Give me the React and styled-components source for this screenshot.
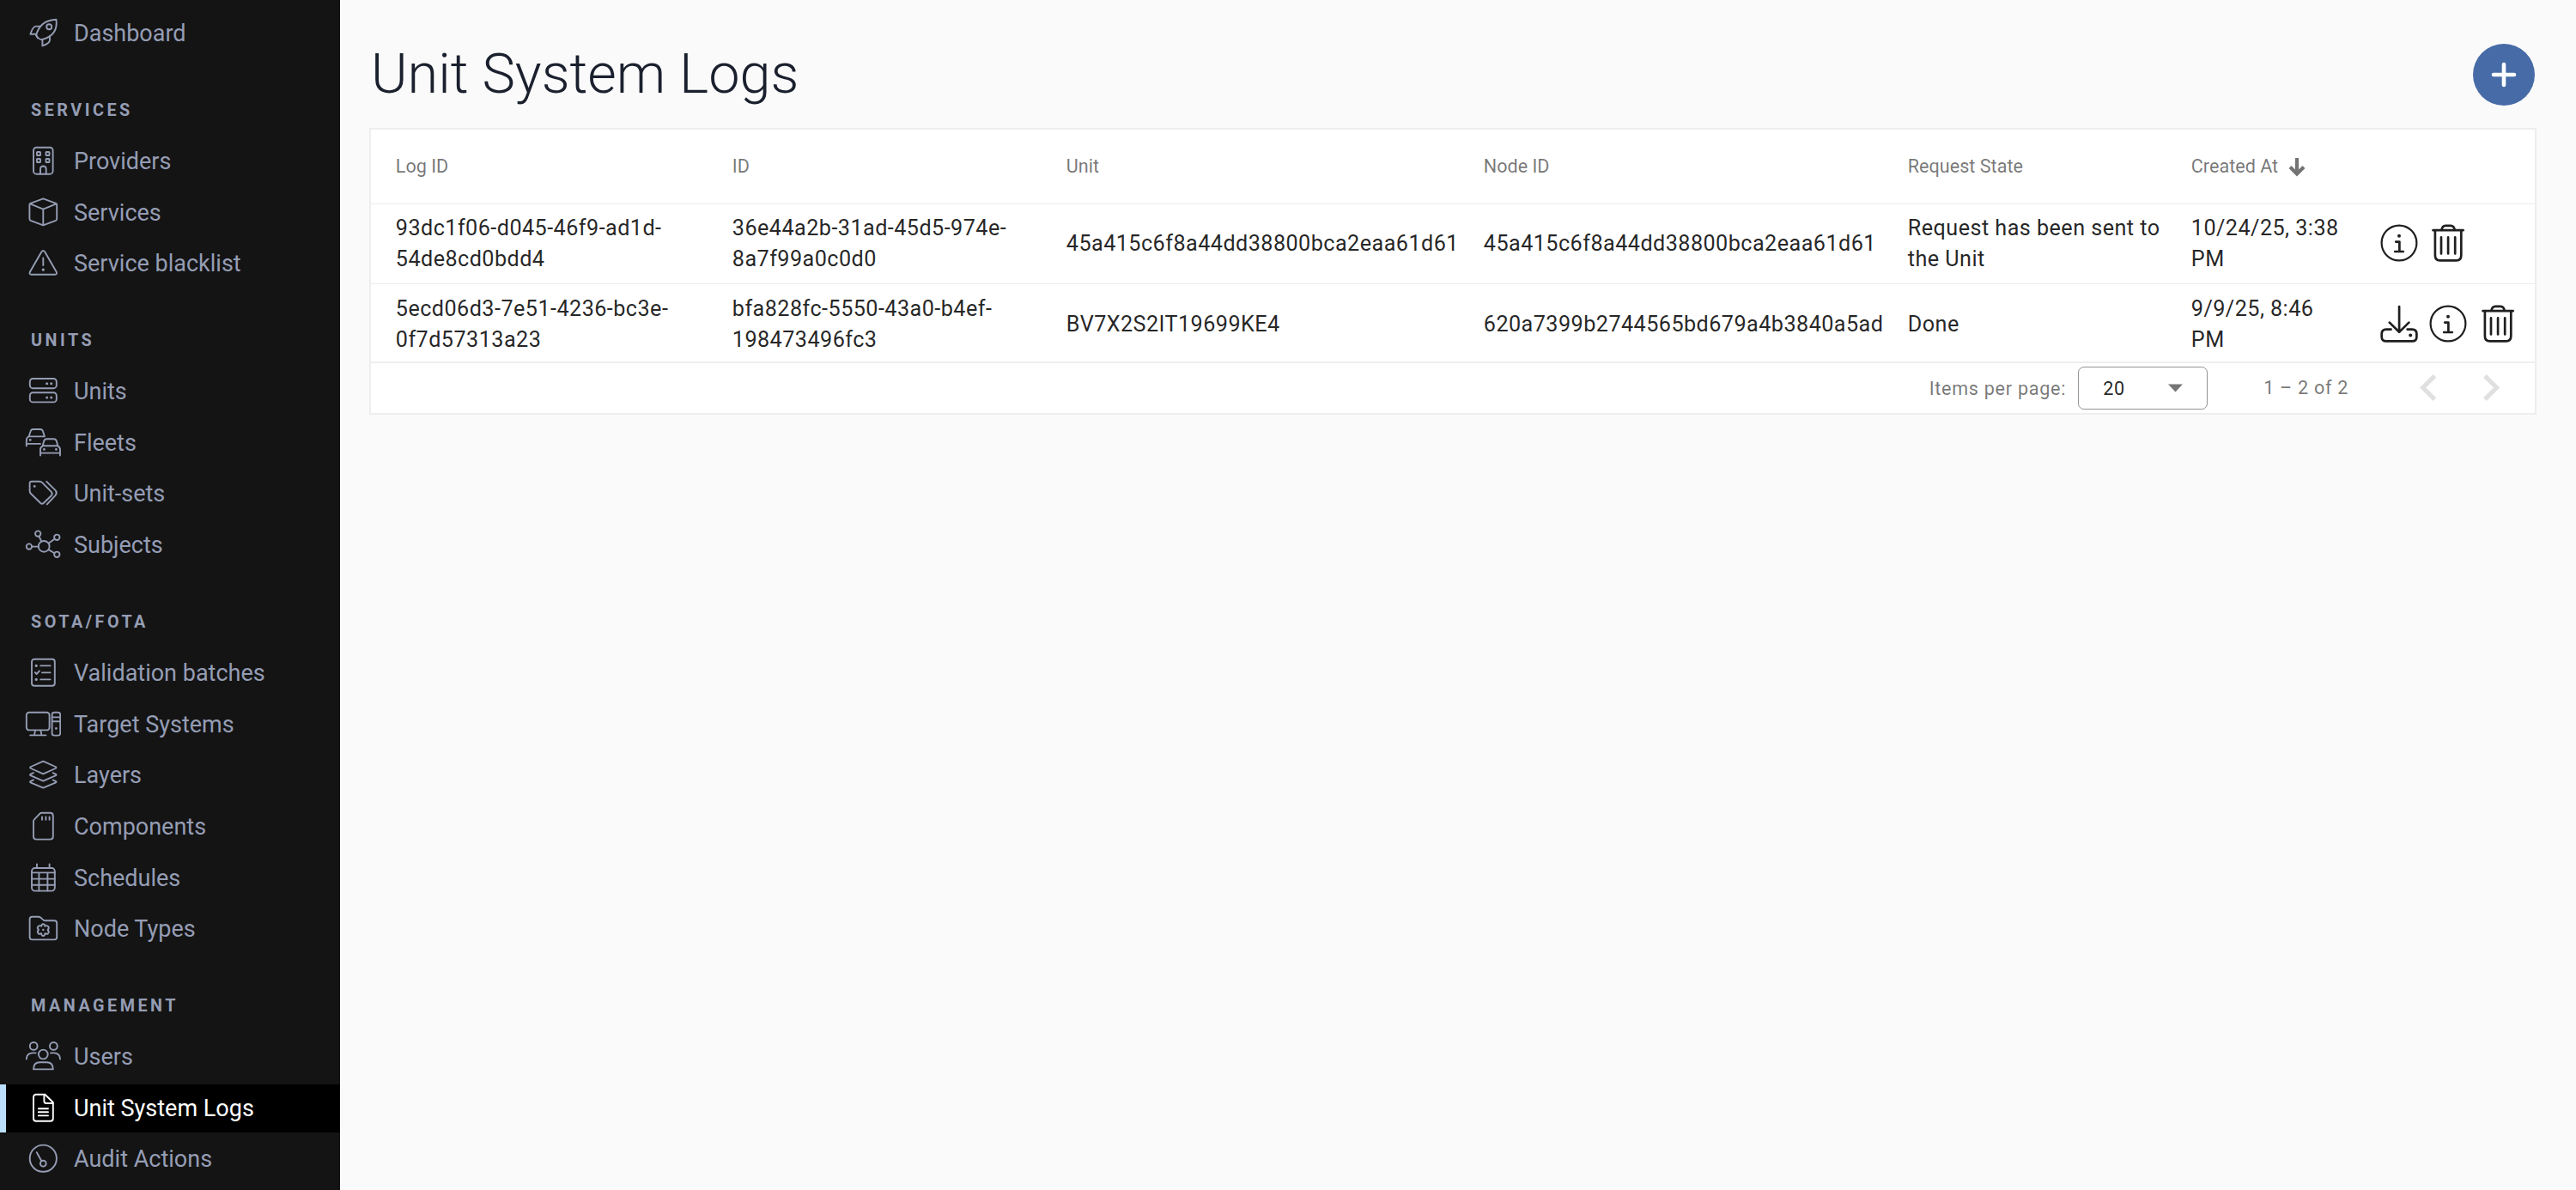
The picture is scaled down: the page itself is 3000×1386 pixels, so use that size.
import React from 'react';
import styled, { createGlobalStyle, css } from 'styled-components';

const GlobalStyle = createGlobalStyle`
  *, *::before, *::after { box-sizing: border-box; }
  html, body, #root { height: 100%; margin: 0; }
  body {
    background: #fafafa;
    font-family: Roboto, "Liberation Sans", sans-serif;
    color: #212121;
    overflow: hidden;
  }
`;

const Shell = styled.div`
  display: flex;
  height: 100vh;
`;

/* ---------- sidebar ---------- */

const Sidebar = styled.nav`
  flex: 0 0 396px;
  padding-top: 11px;
  background: #141414;
  color: #959db4;
  overflow: hidden;
`;

const SectionTitle = styled.h2`
  height: 89.3px;
  margin: 0;
  padding: 45px 0 0 36px;
  font-size: 19.8px;
  line-height: 26px;
  font-weight: 700;
  letter-spacing: 3.5px;
  text-transform: uppercase;
`;

const NavItem = styled.a`
  display: flex;
  align-items: center;
  height: 56px;
  margin-bottom: 3.65px;
  padding-left: 22px;
  border-left: 7px solid transparent;
  font-size: 27px;
  line-height: 32px;
  ${(p) => p.$active && css`
    background: #000;
    border-left-color: #bbdefb;
    color: #fff;
  `}
`;

const NavIcon = styled.svg`
  flex: none;
  width: 42px;
  height: 34px;
  margin: 0 15px 2px 0;
  fill: none;
  stroke: currentColor;
  stroke-width: 1.9;
  stroke-linecap: round;
  stroke-linejoin: round;
`;

/* ---------- content ---------- */

const Content = styled.main`
  flex: 1;
  display: flex;
  flex-direction: column;
  padding: 51px 46px 0 34px;
`;

const TitleBar = styled.header`
  display: flex;
  justify-content: space-between;
  align-items: center;
  height: 72px;
  padding-right: 2px;
`;

const Title = styled.h1`
  margin: 0 0 2px 2px;
  font-size: 64.8px;
  line-height: 72px;
  font-weight: 300;
  color: #1a202e;
`;

const AddButton = styled.button`
  display: grid;
  place-items: center;
  width: 72px;
  height: 72px;
  padding: 0;
  border: 0;
  border-radius: 50%;
  background: #466ba6;
`;

const Card = styled.section`
  margin-top: 26px;
  border: 2px solid #eeeeee;
  background: #fff;
`;

const columns = '392px 389px 486px 494px 330px 220px 1fr';

const HeadRow = styled.div`
  display: grid;
  grid-template-columns: ${columns};
  align-items: center;
  height: 87px;
  padding: 0 0 2px 28.8px;
  border-bottom: 1px solid #ebebeb;
  font-size: 21.6px;
  color: rgba(0, 0, 0, 0.54);
`;

const HeadCell = styled.div`
  display: flex;
  align-items: center;
  gap: 12px;
`;

const SortArrow = styled.svg`
  width: 20px;
  height: 22px;
  margin-top: 3px;
  fill: none;
  stroke: #737373;
  stroke-width: 4.2;
`;

const BodyRow = styled.div`
  display: grid;
  grid-template-columns: ${columns};
  align-items: center;
  height: 93px;
  padding-left: 28.8px;
  border-bottom: 1px solid #ebebeb;
  font-size: 25.2px;
  line-height: 36px;
  letter-spacing: 0.45px;
  color: rgba(0, 0, 0, 0.87);

  &:nth-child(3) {
    height: 92px;
    padding-top: 3px;
    border-bottom: 2px solid #eeeeee;
  }
`;

const Cell = styled.div`
  padding-right: 28px;
`;

const DateCell = styled(Cell)`
  padding-right: 36px;
`;

const Actions = styled.div`
  display: flex;
  gap: 13.6px;
  padding-bottom: 2px;
`;

const ActionIcon = styled.svg`
  flex: none;
  width: 44px;
  height: 44px;
  fill: none;
  stroke: #1f1f1f;
  stroke-width: 2.7;
  stroke-linecap: round;
  stroke-linejoin: round;
`;

const Paginator = styled.footer`
  display: flex;
  justify-content: flex-end;
  align-items: center;
  height: 58px;
  padding-right: 14px;
  font-size: 21.6px;
  letter-spacing: 0.72px;
  color: rgba(0, 0, 0, 0.54);
`;

const PageSize = styled.div`
  display: flex;
  align-items: center;
  justify-content: space-between;
  width: 151px;
  height: 50px;
  margin: 0 65px 0 14px;
  padding: 0 28px;
  border: 1px solid rgba(0, 0, 0, 0.42);
  border-radius: 7px;
  color: rgba(0, 0, 0, 0.87);
`;

const RangeLabel = styled.span`
  padding-bottom: 1px;
`;

const PagerGroup = styled.div`
  display: flex;
  margin-left: 56px;
`;

const PagerButton = styled.button`
  display: grid;
  place-items: center;
  width: 73.4px;
  height: 56px;
  padding: 0 0 1px;
  border: 0;
  background: none;
  color: #e0e0e0;
`;

const Chevron = styled.svg`
  width: 19.3px;
  height: 31px;
  fill: currentColor;
`;

/* ---------- icon drawings, sidebar icons on a 42x34 grid ---------- */

const icons = {
  rocket: (
    <>
      <path d="M13 20.5 Q17.5 2.5 36.5 1.8 Q39 20 20 25 Q17 25.5 13 20.5Z" />
      <circle cx="28.2" cy="10.2" r="3" />
      <path d="M17.8 9.6 H12.8 Q9 9.9 6.4 18.8 L13 18.8" />
      <path d="M20.4 25 V32.4 Q29 29.5 29 25.5 V20.6" />
      <path d="M14.8 23.2 L13.4 20" />
    </>
  ),
  building: (
    <>
      <rect x="10" y="1.7" width="22.6" height="31" rx="3.5" />
      <rect x="14" y="7" width="4" height="4" rx=".6" />
      <rect x="24.5" y="7" width="4" height="4" rx=".6" />
      <rect x="14" y="15" width="4" height="4" rx=".6" />
      <rect x="24.5" y="15" width="4" height="4" rx=".6" />
      <path d="M18 32.4 V26.5 Q18.2 23.6 21.3 23.5 Q24.5 23.6 24.7 26.5 V32.4" />
    </>
  ),
  box: (
    <>
      <path d="M21.3 1.4 L36.2 6.8 Q37.2 7.2 37.2 8.4 V24.5 Q37.2 26.2 36 26.8 L21.3 32.4 L6.6 26.8 Q5.4 26.2 5.4 24.5 V8.4 Q5.4 7.2 6.4 6.8Z" />
      <path d="M6 7.4 L21.3 13.6 L36.6 7.4 M21.3 13.6 V32" />
    </>
  ),
  warning: (
    <>
      <path d="M19.4 4.3 Q21.3 1.8 23.2 4.3 L36.6 27.4 Q38 30.6 35 30.7 H7.6 Q4.6 30.6 6 27.4Z" />
      <path d="M21.3 11.5 V20" />
      <circle cx="21.3" cy="25.2" r=".7" fill="currentColor" />
    </>
  ),
  server: (
    <>
      <rect x="5.8" y="3" width="31" height="11.2" rx="3.5" />
      <rect x="5.8" y="19.2" width="31" height="11.2" rx="3.5" />
      <g fill="currentColor" stroke="none">
        <circle cx="25.6" cy="8.8" r="1.5" />
        <circle cx="30.7" cy="8.8" r="1.5" />
        <circle cx="25.6" cy="24.9" r="1.5" />
        <circle cx="30.7" cy="24.9" r="1.5" />
      </g>
    </>
  ),
  cars: (
    <>
      <path d="M1.8 21.4 V14.6 Q1.8 11.8 4.6 10.2 L6.6 4.2 Q7.2 2 9.6 2 H18 Q20.4 2 21 4.2 L22.9 10.4 H4.4 M2 18.9 H18" />
      <path d="M18 32.6 V25.6 Q18 22.8 20.6 21.6 L22.2 15.6 Q23 13.2 25.4 13.2 H33.6 Q36 13.2 36.8 15.6 L38.4 21.6 Q41 22.8 41 25.6 V32.6 M18 29.6 H41 M20.8 21.2 H38.2" />
      <g fill="currentColor" stroke="none">
        <circle cx="6.2" cy="14.4" r="1.4" />
        <circle cx="22.4" cy="25.4" r="1.4" />
        <circle cx="36.4" cy="25.4" r="1.4" />
      </g>
    </>
  ),
  tags: (
    <>
      <path d="M8 3.8 H17 Q18.8 3.8 20.2 5.2 L30.8 15.8 Q32.8 18 30.8 20.2 L22 28.8 Q20 30.6 18 28.8 L7 18 Q5.6 16.6 5.6 14.8 V6.2 Q5.6 3.8 8 3.8Z" />
      <path d="M25.2 3.8 L35.6 14.2 Q38 17 35.6 19.8 L25.8 30.4" />
      <circle cx="11.2" cy="9.4" r="1.4" fill="currentColor" stroke="none" />
    </>
  ),
  nodes: (
    <>
      <circle cx="22.2" cy="19.4" r="6.4" />
      <circle cx="15.2" cy="4.6" r="3.2" />
      <circle cx="37.3" cy="8.8" r="3.2" />
      <circle cx="4.9" cy="19.6" r="3.2" />
      <circle cx="37.3" cy="28.8" r="3.2" />
      <path d="M16.6 7.8 L19.2 13.4 M34.6 10.8 L27.6 15.8 M8.4 19.6 H15.6 M34.4 27.2 L27.8 23.4" />
    </>
  ),
  checklist: (
    <>
      <rect x="8" y="1.8" width="26.8" height="31" rx="3" />
      <path d="M18.2 9.4 H29.6 M20 17.4 H29.6 M18.2 25.4 H29.6 M11.8 17.2 L13.6 19 L17 15.4" />
      <g fill="currentColor" stroke="none">
        <circle cx="13.2" cy="9.4" r="1.6" />
        <circle cx="13.2" cy="25.4" r="1.6" />
      </g>
    </>
  ),
  computer: (
    <>
      <rect x="1.8" y="3.8" width="26.8" height="20.6" rx="3.2" />
      <path d="M12 24.6 L11 30.2 M18.4 24.6 L19.4 30.2 M6.2 30.4 H24.4" />
      <rect x="31.6" y="3.8" width="9.6" height="26.8" rx="2.6" />
      <path d="M31.8 9.4 H41 M31.8 14.2 H41" />
      <circle cx="36.4" cy="22.4" r="1.4" fill="currentColor" stroke="none" />
    </>
  ),
  layers: (
    <>
      <path d="M21.3 1.6 L35.6 8 Q37.4 9 35.6 10 L21.3 16.4 L7 10 Q5.2 9 7 8Z" />
      <path d="M10 15.2 L6.8 16.6 Q5.2 17.6 7 18.4 L21.3 24.6 L35.6 18.4 Q37.4 17.6 35.8 16.6 L32.6 15.2" />
      <path d="M10 23.4 L6.8 24.8 Q5.2 25.8 7 26.6 L21.3 32.6 L35.6 26.6 Q37.4 25.8 35.8 24.8 L32.6 23.4" />
    </>
  ),
  sdcard: (
    <>
      <path d="M19.4 1.8 H29.4 Q32.8 1.8 32.8 5.2 V29.2 Q32.8 32.6 29.4 32.6 H13.6 Q10 32.6 10 29.2 V11.6 Q10 10.4 10.8 9.6 L17.4 2.6 Q18.2 1.8 19.4 1.8Z" />
      <path d="M20 6.4 V9.8 M24.4 6.4 V9.8 M28.6 6.4 V9.8" />
    </>
  ),
  calendar: (
    <>
      <rect x="8" y="6" width="26.8" height="26.6" rx="3.6" />
      <path d="M14 1.4 V6 M28.6 1.4 V6 M8 11.4 H34.8 M8 18.6 H34.8 M8 25.8 H34.8 M16.4 11.4 V32.4 M26.4 11.4 V32.4" />
    </>
  ),
  folder: (
    <>
      <path d="M8.4 3.8 H15.6 Q17.2 3.8 18.4 4.8 L21.4 7.4 Q22.4 8.2 23.8 8.2 H34.2 Q37.2 8.2 37.2 11 V27.6 Q37.2 30.4 34.4 30.4 H8.4 Q5.6 30.4 5.6 27.6 V6.6 Q5.6 3.8 8.4 3.8Z" />
      <path d="M19.2 14.8 Q19.4 12.2 21.3 12.2 Q23.2 12.2 23.4 14.8 Q25.6 13.4 27 14.8 Q28.8 16.6 26.6 19 Q28.8 21.4 27 23.2 Q25.6 24.4 23.4 23.2 Q23.2 26 21.3 26 Q19.4 26 19.2 23.2 Q17 24.4 15.6 23.2 Q13.8 21.4 16 19 Q13.8 16.6 15.6 14.8 Q17 13.4 19.2 14.8Z" />
      <circle cx="21.3" cy="19" r="1.2" fill="currentColor" stroke="none" />
    </>
  ),
  users: (
    <>
      <circle cx="10.2" cy="5.4" r="4.4" />
      <circle cx="33.4" cy="5.4" r="4.4" />
      <circle cx="21.3" cy="15" r="5.4" />
      <path d="M1.8 20.6 Q1.8 14.2 8.4 13.4 H12.6 M41 20.6 Q41 14.2 34.4 13.4 H30" />
      <path d="M10 32.4 Q10 24.2 17.4 24.2 H25.4 Q32.8 24.2 32.8 32.4Z" />
    </>
  ),
  document: (
    <>
      <path d="M13 1.8 H23.4 L32.8 11 V29.8 Q32.8 32.8 29.8 32.8 H13 Q10 32.8 10 29.8 V4.8 Q10 1.8 13 1.8Z" />
      <path d="M22.4 2 V9.6 Q22.4 12 24.8 12 H32.6 M15.8 18.2 H27 M15.8 22.2 H27 M15.8 26.4 H27" />
    </>
  ),
  gauge: (
    <>
      <circle cx="21.3" cy="17.2" r="15.6" />
      <circle cx="21.3" cy="23.2" r="3.4" />
      <path d="M19.4 20.2 L13.8 10.2" />
    </>
  ),
};

const navigation = [
  { items: [['Dashboard', 'rocket']] },
  {
    title: 'Services',
    items: [['Providers', 'building'], ['Services', 'box'], ['Service blacklist', 'warning']],
  },
  {
    title: 'Units',
    items: [['Units', 'server'], ['Fleets', 'cars'], ['Unit-sets', 'tags'], ['Subjects', 'nodes']],
  },
  {
    title: 'SOTA/FOTA',
    items: [
      ['Validation batches', 'checklist'],
      ['Target Systems', 'computer'],
      ['Layers', 'layers'],
      ['Components', 'sdcard'],
      ['Schedules', 'calendar'],
      ['Node Types', 'folder'],
    ],
  },
  {
    title: 'Management',
    items: [['Users', 'users'], ['Unit System Logs', 'document'], ['Audit Actions', 'gauge']],
  },
];

const InfoIcon = () => (
  <ActionIcon viewBox="0 0 44 44">
    <circle cx="22" cy="22" r="20.4" strokeWidth="2.2" />
    <circle cx="22" cy="13.8" r="2" fill="#1f1f1f" stroke="none" />
    <path d="M18.2 20.6 H22.4 V32 M17.2 32 H26.8" />
  </ActionIcon>
);

const TrashIcon = () => (
  <ActionIcon viewBox="0 0 44 44">
    <path d="M4.6 7.2 H39.6" />
    <path d="M14.4 6.8 Q15.4 1.8 19 1.8 H25.2 Q28.8 1.8 29.8 6.8" />
    <path d="M6.9 7.6 V36.6 Q6.9 42.4 12.6 42.4 H31.6 Q37.3 42.4 37.3 36.6 V7.6" />
    <path d="M14 15.4 V34.4 M22.1 15.4 V34.4 M30.2 15.4 V34.4" />
  </ActionIcon>
);

const DownloadIcon = () => (
  <ActionIcon viewBox="0 0 44 44">
    <path d="M22.1 2 V31.4 M10.8 20.6 L22.1 31.8 L33.4 20.6" />
    <path d="M12.6 28.6 H7 Q1.7 28.6 1.7 33.8 V37.2 Q1.7 42.4 7 42.4 H37.2 Q42.4 42.4 42.4 37.2 V33.8 Q42.4 28.6 37.2 28.6 H31.6" />
    <circle cx="35.2" cy="35.4" r="2" fill="#1f1f1f" stroke="none" />
  </ActionIcon>
);

const logs = [
  {
    logId: '93dc1f06-d045-46f9-ad1d-54de8cd0bdd4',
    id: '36e44a2b-31ad-45d5-974e-8a7f99a0c0d0',
    unit: '45a415c6f8a44dd38800bca2eaa61d61',
    node: '45a415c6f8a44dd38800bca2eaa61d61',
    state: 'Request has been sent to the Unit',
    created: '10/24/25, 3:38 PM',
  },
  {
    logId: '5ecd06d3-7e51-4236-bc3e-0f7d57313a23',
    id: 'bfa828fc-5550-43a0-b4ef-198473496fc3',
    unit: 'BV7X2S2IT19699KE4',
    node: '620a7399b2744565bd679a4b3840a5ad',
    state: 'Done',
    created: '9/9/25, 8:46 PM',
    downloadable: true,
  },
];

export default function App() {
  return (
    <Shell>
      <GlobalStyle />
      <Sidebar>
        {navigation.map((group, index) => (
          <React.Fragment key={index}>
            {group.title && <SectionTitle>{group.title}</SectionTitle>}
            {group.items.map(([label, icon]) => (
              <NavItem key={label} $active={label === 'Unit System Logs'}>
                <NavIcon viewBox="0 0 42 34">{icons[icon]}</NavIcon>
                {label}
              </NavItem>
            ))}
          </React.Fragment>
        ))}
      </Sidebar>
      <Content>
        <TitleBar>
          <Title>Unit System Logs</Title>
          <AddButton aria-label="Add">
            <svg width="30" height="30" viewBox="0 0 30 30" stroke="#fff" strokeWidth="4.6" strokeLinecap="round">
              <path d="M15 3 V27 M3 15 H27" />
            </svg>
          </AddButton>
        </TitleBar>
        <Card>
          <HeadRow>
            <HeadCell>Log ID</HeadCell>
            <HeadCell>ID</HeadCell>
            <HeadCell>Unit</HeadCell>
            <HeadCell>Node ID</HeadCell>
            <HeadCell>Request State</HeadCell>
            <HeadCell>
              Created At
              <SortArrow viewBox="0 0 20 22">
                <path d="M10 0 V19 M2 10.6 L10 18.6 L18 10.6" />
              </SortArrow>
            </HeadCell>
          </HeadRow>
          {logs.map((log) => (
            <BodyRow key={log.logId}>
              <Cell>{log.logId}</Cell>
              <Cell>{log.id}</Cell>
              <Cell>{log.unit}</Cell>
              <Cell>{log.node}</Cell>
              <Cell>{log.state}</Cell>
              <DateCell>{log.created}</DateCell>
              <Actions>
                {log.downloadable && <DownloadIcon />}
                <InfoIcon />
                <TrashIcon />
              </Actions>
            </BodyRow>
          ))}
          <Paginator>
            Items per page:
            <PageSize>
              20
              <svg width="17" height="10" viewBox="0 0 17 10" fill="#757575">
                <path d="M0 0.5 H17 L8.5 9.5Z" />
              </svg>
            </PageSize>
            <RangeLabel>1 – 2 of 2</RangeLabel>
            <PagerGroup>
              <PagerButton aria-label="Previous page">
                <Chevron viewBox="8 6 7.41 12">
                  <path d="M15.41 7.41 14 6l-6 6 6 6 1.41-1.41L10.83 12z" />
                </Chevron>
              </PagerButton>
              <PagerButton aria-label="Next page">
                <Chevron viewBox="8.59 6 7.41 12">
                  <path d="M10 6 8.59 7.41 13.17 12l-4.58 4.59L10 18l6-6z" />
                </Chevron>
              </PagerButton>
            </PagerGroup>
          </Paginator>
        </Card>
      </Content>
    </Shell>
  );
}
